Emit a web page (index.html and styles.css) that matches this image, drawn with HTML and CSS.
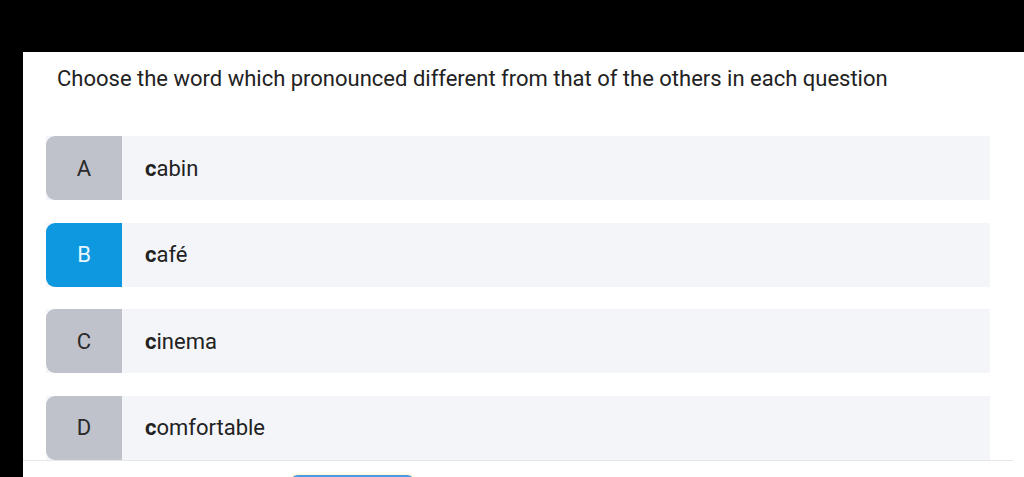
FILE: index.html
```html
<!DOCTYPE html>
<html lang="en">
<head>
    <meta charset="UTF-8">
    <meta name="viewport" content="width=device-width, initial-scale=1.0">
    <title>Question</title>
    <link rel="stylesheet" href="styles.css">
</head>
<body>
    <div class="screen">
        <div class="card">
            <p class="question">Choose the word which pronounced different from that of the others in each question</p>

            <div class="options">
                <div class="option">
                    <span class="letter">A</span>
                    <span class="answer"><b>c</b>abin</span>
                </div>
                <div class="option selected">
                    <span class="letter">B</span>
                    <span class="answer"><b>c</b>afé</span>
                </div>
                <div class="option">
                    <span class="letter">C</span>
                    <span class="answer"><b>c</b>inema</span>
                </div>
                <div class="option">
                    <span class="letter">D</span>
                    <span class="answer"><b>c</b>omfortable</span>
                </div>
            </div>

            <div class="footer">
                <button class="next-btn" aria-label="Next"></button>
            </div>
        </div>
    </div>
</body>
</html>
```

FILE: styles.css
```css
/* General Styles */
body {
    margin: 0;
    padding: 0;
    background-color: #000000;
    font-family: Roboto, "Liberation Sans", Arial, sans-serif;
    overflow: hidden;
}

.screen {
    padding-top: 52px;
    padding-left: 23px;
    height: 425px;
}

.card {
    background: #ffffff;
    height: 100%;
    padding-top: 1px;
    overflow: hidden;
}

.question {
    margin: 13px 0 0 34px;
    font-size: 22px;
    line-height: 26px;
    color: #222222;
}

.options {
    display: flex;
    flex-direction: column;
    gap: 22.5px;
    margin-top: 44px;
    margin-right: 11px;
    padding: 0 23px 0 23px;
    border-bottom: 1px solid #e6e7eb;
}

.option {
    display: flex;
    height: 64px;
    background: #f4f5f9;
}

.letter {
    width: 76px;
    flex-shrink: 0;
    display: flex;
    align-items: center;
    justify-content: center;
    background: #bfc2ca;
    border-radius: 9px 0 0 9px;
    font-size: 22px;
    color: #2a2a2a;
}

.selected .letter {
    background: #0d98e0;
    color: #e6f6ff;
}

.answer {
    display: flex;
    align-items: center;
    padding-left: 23px;
    font-size: 22px;
    color: #222222;
}

.answer b {
    font-weight: 700;
}

.footer {
    padding-left: 267px;
    padding-top: 14px;
}

.next-btn {
    width: 125px;
    height: 40px;
    border: none;
    border-radius: 8px;
    background: #4a98e6;
    box-shadow: 0 -2px 3px #fff8dc;
}
```
